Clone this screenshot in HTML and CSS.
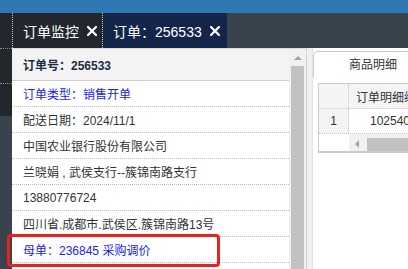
FILE: index.html
```html
<!DOCTYPE html>
<html lang="zh-CN">
<head>
<meta charset="utf-8">
<title>订单</title>
<link rel="stylesheet" href="styles.css">
</head>
<body>
<div class="app">
  <div class="topbar"></div>
  <div class="tabbar">
    <div class="tab-spacer"></div>
    <div class="tab tab-plain">
      <span class="tab-title">订单监控</span>
      <svg class="tab-close" width="10" height="10" viewBox="0 0 10 10"><path d="M1 1L9 9M9 1L1 9" stroke="#fff" stroke-width="2.2" stroke-linecap="square"/></svg>
    </div>
    <div class="tab tab-active">
      <span class="tab-title">订单：256533</span>
      <svg class="tab-close" width="10" height="10" viewBox="0 0 10 10"><path d="M1 1L9 9M9 1L1 9" stroke="#fff" stroke-width="2.2" stroke-linecap="square"/></svg>
    </div>
    <div class="tab-rest"></div>
  </div>
  <div class="main">
    <div class="sidebar">
      <div class="side-item side-dark"></div>
      <div class="side-item side-dark side-tall"></div>
      <div class="side-rest"></div>
    </div>
    <div class="leftpanel">
      <div class="info">
        <div class="info-head">订单号：256533</div>
        <div class="info-row blue">订单类型：销售开单</div>
        <div class="info-row">配送日期：2024/11/1</div>
        <div class="info-row">中国农业银行股份有限公司</div>
        <div class="info-row">兰晓娟 , 武侯支行--簇锦南路支行</div>
        <div class="info-row">13880776724</div>
        <div class="info-row">四川省.成都市.武侯区.簇锦南路13号</div>
        <div class="info-row blue">母单：236845 采购调价</div>
        <div class="info-row"></div>
      </div>
      <div class="vscroll">
        <div class="vscroll-up"><span class="arrow-up"></span></div>
        <div class="vscroll-thumb"></div>
      </div>
      <div class="vscroll-pad"></div>
    </div>
    <div class="splitter"></div>
    <div class="gap"></div>
    <div class="rightpanel">
      <div class="rtabs">
        <div class="rtab-lead"></div>
        <div class="rtab">商品明细</div>
      </div>
      <div class="grid">
        <div class="grow ghead">
          <div class="gcell rn"></div>
          <div class="gcell gtext">订单明细编号</div>
        </div>
        <div class="grow gdata">
          <div class="gcell rn">1</div>
          <div class="gcell gtext gnum">102540</div>
        </div>
        <div class="grow gscroll">
          <div class="gcell rn blank"></div>
          <div class="hscroll">
            <span class="arrow-left"></span>
            <div class="hscroll-thumb"></div>
          </div>
        </div>
      </div>
    </div>
  </div>
  <div class="highlight"></div>
</div>
</body>
</html>
```

FILE: styles.css
```css
* { box-sizing: border-box; }
html, body { margin: 0; padding: 0; }
body {
  width: 408px;
  height: 269px;
  overflow: hidden;
  font-family: "Liberation Sans", "Noto Sans CJK SC", sans-serif;
  font-size: 12px;
  color: #333;
  background: #fff;
}
.app { position: relative; width: 408px; height: 269px; overflow: hidden; }

.topbar { height: 13px; background: #2f78b4; }

.tabbar { height: 35px; display: flex; background: #38434d; }
.tab-spacer { width: 12px; background: #22272e; }
.tab {
  display: flex;
  align-items: center;
  color: #fff;
  font-size: 14px;
}
.tab-plain {
  width: 91px;
  background: #22272e;
  border-left: 1px dotted #c8c8c8;
  border-right: 1px dotted #c8c8c8;
  padding-left: 10px;
}
.tab-active {
  width: 124px;
  background: #13264a;
  padding-left: 10px;
}
.tab-title { white-space: nowrap; }
.tab-plain .tab-close { margin-left: 8px; }
.tab-active .tab-close { margin-left: 8px; }
.tab-rest { flex: 1; }

.main { display: flex; height: 221px; }

.sidebar { width: 12px; display: flex; flex-direction: column; background: #38434d; }
.side-item { height: 35px; border-top: 1px dotted #8a8f96; }
.side-dark { background: #22272e; }
.side-tall { height: 33px; }
.side-rest { flex: 1; }

.leftpanel {
  width: 294px;
  display: flex;
  background: #f3f3f3;
  border-top: 1px solid #dcdcdc;
}
.info { width: 277px; background: #fff; }
.info-head {
  height: 32px;
  background: #f3f3f3;
  border-bottom: 1px solid #cfcfcf;
  padding-left: 11px;
  display: flex;
  align-items: center;
  font-weight: bold;
  color: #1f2a44;
}
.info-row {
  height: 26px;
  border-bottom: 1px dotted #b8b8b8;
  padding-left: 11px;
  display: flex;
  align-items: center;
  white-space: nowrap;
  color: #333;
}
.info-row.blue { color: #1a1aee; }

.vscroll {
  width: 15px;
  background: #f1f1f1;
  display: flex;
  flex-direction: column;
  padding-left: 2px;
}
.vscroll-up {
  height: 17px;
  display: flex;
  justify-content: center;
  align-items: center;
}
.arrow-up {
  width: 0; height: 0;
  border-left: 4px solid transparent;
  border-right: 4px solid transparent;
  border-bottom: 4px solid #a3a3a3;
}
.vscroll-thumb { flex: 1; background: #c1c1c1; }
.vscroll-pad { width: 2px; background: #f0f0f0; }

.splitter { width: 1px; background: #d2d2d2; }
.gap { width: 5px; background: #efefef; }

.rightpanel { flex: 1; background: #fff; border-left: 1px solid #e2e2e2; overflow: hidden; }
.rtabs { height: 29px; display: flex; align-items: flex-end; }
.rtab-lead { width: 4px; height: 26px; }
.rtab {
  flex: none;
  width: 120px;
  height: 26px;
  border: 1px solid #cccccc;
  border-bottom: none;
  border-top-left-radius: 5px;
  text-align: center;
  line-height: 26px;
  color: #333;
  background: #fff;
}

.grid {
  margin-top: 6px;
  margin-left: 5px;
  width: 200px;
  border: 1px solid #cccccc;
  border-bottom: 2px solid #cccccc;
}
.grow { display: flex; }
.gcell {
  display: flex;
  align-items: center;
  white-space: nowrap;
}
.rn {
  width: 30px;
  flex: none;
  justify-content: center;
  background: #f4f4f4;
  border-right: 1px dotted #c4c4c4;
  color: #333;
}
.rn.blank { background: #fff; border-right: none; }
.gtext { padding-left: 7px; }
.ghead { height: 25px; background: #f4f4f4; border-bottom: 1px solid #dddddd; }
.gdata { height: 25px; border-bottom: 1px dotted #c4c4c4; }
.gnum { padding-left: 21px; }
.gscroll { height: 17px; }
.hscroll {
  flex: 1;
  display: flex;
  align-items: center;
  background: #f1f1f1;
  padding-top: 2px;
}
.arrow-left {
  margin-left: 6px;
  width: 0; height: 0;
  border-top: 4px solid transparent;
  border-bottom: 4px solid transparent;
  border-right: 4px solid #a3a3a3;
}
.hscroll-thumb { margin-left: 8px; flex: 1; height: 13px; background: #c1c1c1; align-self: flex-end; }

.highlight {
  position: absolute;
  left: 7px;
  top: 234px;
  width: 213px;
  height: 33px;
  border: 3px solid #e8231f;
  border-radius: 4px;
}
```
